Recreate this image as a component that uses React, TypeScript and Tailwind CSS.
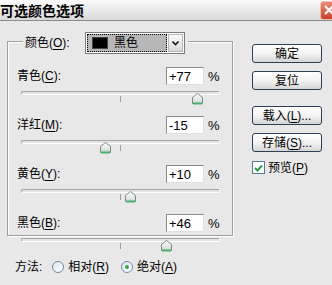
import React from "react";

const rows = [
  { label: "青色", key: "C", value: 77 },
  { label: "洋红", key: "M", value: -15 },
  { label: "黄色", key: "Y", value: 10 },
  { label: "黑色", key: "B", value: 46 },
];

function Key({ k }: { k: string }) {
  return (
    <>
      (<span className="underline underline-offset-[2px]">{k}</span>)
    </>
  );
}

function Thumb() {
  return (
    <svg width="11" height="12" viewBox="0 0 11 12">
      <defs>
        <linearGradient id="tg" x1="0" y1="0" x2="0" y2="1">
          <stop offset="0" stopColor="#ffffff" />
          <stop offset="1" stopColor="#cfd8d2" />
        </linearGradient>
      </defs>
      <path d="M5.5 0.5 L10.5 4.5 L10.5 10.5 L0.5 10.5 L0.5 4.5 Z" fill="url(#tg)" stroke="#7d8a82" strokeWidth="1" />
      <path d="M1 10.5 L10 10.5" stroke="#43b36a" strokeWidth="2" />
    </svg>
  );
}

function Slider({ value }: { value: number }) {
  const pos = ((value + 100) / 200) * 199;
  return (
    <div className="relative ml-[13px] w-[199px] h-[25px]">
      <div className="mt-[6px] h-[4px] rounded-full border border-t-[#a4a4a4] border-l-[#a4a4a4] border-b-white border-r-white bg-[#e4e4e4]" />
      <div className="absolute left-[99px] top-[5px] w-px h-[6px] bg-[#9c9c9c]" />
      <div className="absolute top-[2px]" style={{ left: Math.round(pos - 5.5) }}>
        <Thumb />
      </div>
    </div>
  );
}

function Btn({ children }: { children: React.ReactNode }) {
  return (
    <button
      type="button"
      className="w-[70px] h-[19px] rounded-[3px] border border-[#2c3f57] bg-linear-to-b from-white via-[#f3f3f3] to-[#d6d6d6] flex items-center justify-center text-[12px] leading-none text-black"
    >
      {children}
    </button>
  );
}

export default function App() {
  return (
    <div className="w-[332px] h-[285px] overflow-hidden bg-[#e8e8e8] font-['Liberation_Sans','Noto_Sans_CJK_SC',sans-serif] text-black text-[12px]">
      {/* Title bar */}
      <div className="h-[21px] flex items-center justify-between overflow-hidden border-b border-[#8c8c8c] bg-linear-to-b from-[#fbfbfb] to-[#d9d9d9]">
        <div className="font-['Noto_Sans_CJK_SC',sans-serif] font-bold text-[14px] leading-none">可选颜色选项</div>
        <div className="w-[22px] h-[19px] -mr-[10px] rounded-[3px] border border-[#f3c0b5] bg-linear-to-b from-[#ec8a75] to-[#c8402a] flex items-center justify-start pl-[3px]">
          <svg width="10" height="10" viewBox="0 0 10 10">
            <path d="M1 1 L9 9 M9 1 L1 9" stroke="#fff" strokeWidth="2" />
          </svg>
        </div>
      </div>

      <div className="flex">
        {/* Left column */}
        <div className="pl-[7px]">
          <div className="mt-[20px] w-[226px] h-[195px] border border-[#a0a0a0] shadow-[inset_1px_1px_0_#fff,1px_1px_0_#fff]">
            {/* legend */}
            <div className="-mt-[10px] ml-[15px] flex items-center w-fit bg-[#e8e8e8] pl-[2px] pr-[3px] h-[22px]">
              <span className="w-[50px] mr-[10px] leading-none whitespace-nowrap">
                颜色<Key k="O" />:
              </span>
              <div className="w-[100px] h-[22px] border border-[#7c7c7c] bg-white flex items-center p-[1px]">
                <div className="flex-1 h-[18px] bg-[#b7b7b7] outline outline-1 outline-dotted outline-black -outline-offset-1 flex items-center pl-[5px]">
                  <div className="w-[16px] h-[12px] bg-black border border-[#444]" />
                  <span className="ml-[6px] leading-none">黑色</span>
                </div>
                <div className="w-[15px] h-[18px] ml-[1px] border border-[#b8b8b8] bg-linear-to-b from-[#fafafa] to-[#d8d8d8] flex items-center justify-center">
                  <svg width="7" height="5" viewBox="0 0 7 5">
                    <path d="M0.5 0.5 L3.5 3.5 L6.5 0.5" fill="none" stroke="#222" strokeWidth="1.6" />
                  </svg>
                </div>
              </div>
            </div>

            <div className="mt-[13px]">
              {rows.map((r) => (
                <div key={r.key}>
                  <div className="h-[18px] flex items-center">
                    <span className="ml-[9px] w-[149px] leading-none">
                      {r.label}
                      <Key k={r.key} />:
                    </span>
                    <div className="w-[38px] h-[18px] bg-white border border-t-[#8a8a8a] border-l-[#8a8a8a] border-r-[#e0e0e0] border-b-[#e0e0e0] flex items-center pl-[2px] text-[13px] leading-none">
                      {r.value > 0 ? `+${r.value}` : `${r.value}`}
                    </div>
                    <span className="ml-[4px] text-[13px] leading-none">%</span>
                  </div>
                  <Slider value={r.value} />
                </div>
              ))}
            </div>
          </div>

          {/* method row */}
          <div className="mt-[23px] ml-[8px] h-[16px] flex items-center leading-none">
            <span>方法:</span>
            <div className="ml-[10px] w-[12px] h-[12px] rounded-full border border-[#6f8aa6] bg-linear-to-br from-[#dfe6ea] to-white" />
            <span className="ml-[4px]">
              相对<Key k="R" />
            </span>
            <div className="ml-[12px] w-[12px] h-[12px] rounded-full border border-[#6f8aa6] bg-linear-to-br from-[#dfe6ea] to-white flex items-center justify-center">
              <div className="w-[4px] h-[4px] rounded-full bg-[#2fa84f]" />
            </div>
            <span className="ml-[4px]">
              绝对<Key k="A" />
            </span>
          </div>
        </div>

        {/* Right column */}
        <div className="ml-[19px] pt-[23px] flex flex-col">
          <Btn>确定</Btn>
          <div className="mt-[8px]">
            <Btn>复位</Btn>
          </div>
          <div className="mt-[16px]">
            <Btn>
              载入<Key k="L" />...
            </Btn>
          </div>
          <div className="mt-[8px]">
            <Btn>
              存储<Key k="S" />...
            </Btn>
          </div>
          <div className="mt-[9px] flex items-center leading-none">
            <div className="w-[13px] h-[13px] border border-[#5a7690] bg-white flex items-center justify-center">
              <svg width="9" height="8" viewBox="0 0 9 8">
                <path d="M1 4 L3.5 6.5 L8 1.5" fill="none" stroke="#2a9e3f" strokeWidth="2" />
              </svg>
            </div>
            <span className="ml-[3px]">
              预览<Key k="P" />
            </span>
          </div>
        </div>
      </div>
    </div>
  );
}
